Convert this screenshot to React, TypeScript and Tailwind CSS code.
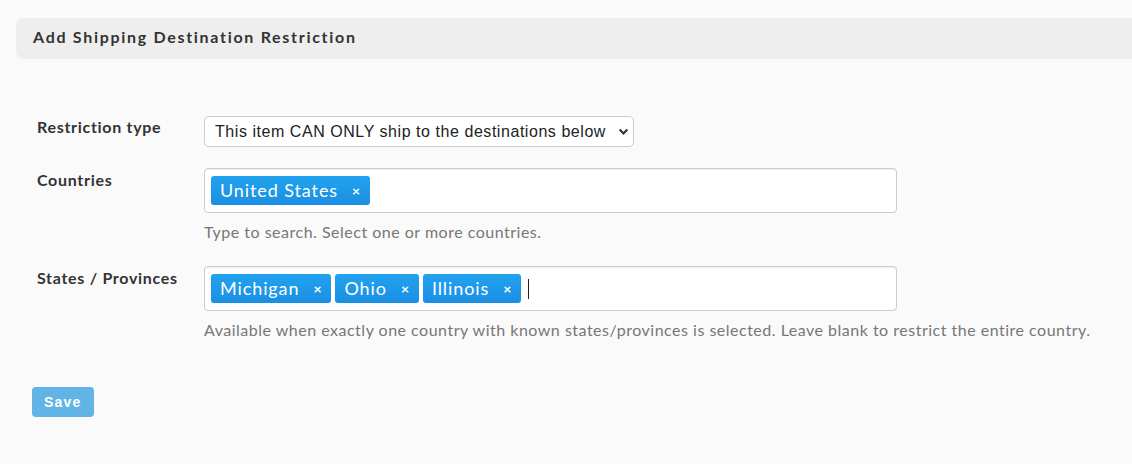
const lato = "font-['Lato',sans-serif]";

function Tag({ label }: { label: string }) {
  return (
    <span className="flex h-[29px] items-center rounded-[3px] bg-gradient-to-b from-[#22a2ee] to-[#1b8fe3] pl-[9px] pr-[9px] text-[18px] tracking-[0.9px] text-white">
      {label}
      <span className="ml-[14px] text-[14px] font-bold">×</span>
    </span>
  );
}

function Row({ label, children, help }: { label: string; children: React.ReactNode; help?: string }) {
  return (
    <div className="flex">
      <label className="w-[167px] shrink-0 text-[16px] font-bold tracking-[0.7px] text-[#333]">{label}</label>
      <div className="flex flex-col">
        {children}
        {help && <p className="mt-[7px] text-[16px] tracking-[0.5px] text-[#777]">{help}</p>}
      </div>
    </div>
  );
}

function TagBox({ tags, cursor }: { tags: string[]; cursor?: boolean }) {
  return (
    <div className="flex h-[45px] w-[693px] items-center gap-[4px] rounded-[4px] border border-[#ccc] bg-white px-[6px] shadow-[inset_0_1px_1px_rgba(0,0,0,0.06)]">
      {tags.map((t) => (
        <Tag key={t} label={t} />
      ))}
      {cursor && <span className="ml-[3px] h-[20px] w-px bg-[#222]" />}
    </div>
  );
}

export default function App() {
  return (
    <div className={`min-h-[464px] bg-[#fafafa] pt-[18px] ${lato}`}>
      <div className="ml-[16px] -mr-4 flex h-[41px] items-center rounded-[8px] bg-[#eeeeee] pb-[3px] pl-[17px]">
        <h2 className="text-[16px] font-bold tracking-[1.7px] text-[#333]">Add Shipping Destination Restriction</h2>
      </div>

      <div className="mt-[56px] flex flex-col pl-[37px]">
        <Row label="Restriction type">
          <div className="relative mt-[1px] flex h-[31px] w-[430px] items-center rounded-[5px] border border-[#ccc] bg-white pl-[10px] font-['Liberation_Sans',Arial,sans-serif] text-[16px] tracking-[0.55px] text-[#222]">
            This item CAN ONLY ship to the destinations below
            <svg viewBox="0 0 10 10" className="absolute right-[4px] h-[11px] w-[11px] text-[#333]" fill="none">
              <path d="M1.5 3.2 5 6.8 8.5 3.2" stroke="currentColor" strokeWidth="2" />
            </svg>
          </div>
        </Row>

        <div className="mt-[21px]">
          <Row label="Countries" help="Type to search. Select one or more countries.">
            <TagBox tags={["United States"]} />
          </Row>
        </div>

        <div className="mt-[22px]">
          <Row
            label="States / Provinces"
            help="Available when exactly one country with known states/provinces is selected. Leave blank to restrict the entire country."
          >
            <TagBox tags={["Michigan", "Ohio", "Illinois"]} cursor />
          </Row>
        </div>

        <div className="mt-[45px] -ml-[5px]">
          <button className="h-[30px] rounded-[4px] bg-[#63b4e6] px-[12px] font-['Liberation_Sans',Arial,sans-serif] text-[14px] font-bold tracking-[1.2px] text-white">
            Save
          </button>
        </div>
      </div>
    </div>
  );
}
